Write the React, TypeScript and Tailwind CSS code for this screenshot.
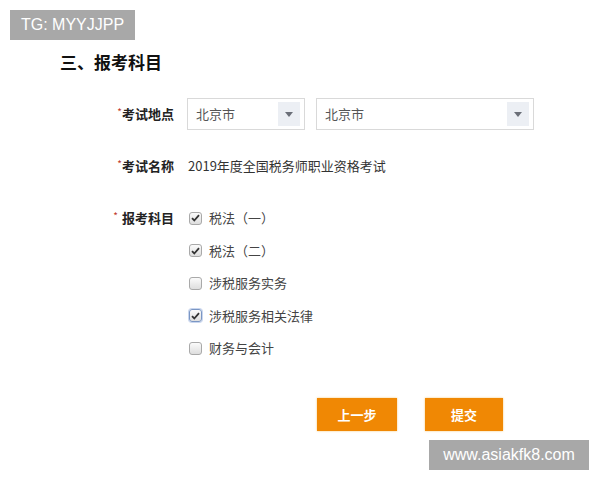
const subjects: [string, boolean, boolean][] = [
  ["税法（一）", true, false],
  ["税法（二）", true, false],
  ["涉税服务实务", false, false],
  ["涉税服务相关法律", true, true],
  ["财务与会计", false, false],
];

const cjk = { fontFamily: '"Noto Sans CJK SC", "Liberation Sans", sans-serif' };

function Arrow() {
  return (
    <span className="flex h-[24px] w-[22px] items-center justify-center bg-[#eceff4]">
      <svg width="8" height="5" viewBox="0 0 8 5">
        <path d="M0 0h8L4 5z" fill="#6b6f78" />
      </svg>
    </span>
  );
}

function Select({ width }: { width: string }) {
  return (
    <div className={`flex h-[32px] ${width} items-center justify-between border border-[#d9d9d9] bg-white pl-[8px] pr-[4px]`}>
      <span className="text-[13px] text-[#555]">北京市</span>
      <Arrow />
    </div>
  );
}

function Box({ checked, focus }: { checked: boolean; focus: boolean }) {
  return (
    <span
      className={`ml-px flex h-[13px] w-[13px] items-center justify-center rounded-[3px] border bg-gradient-to-b from-[#fbfbfb] to-[#dedede] ${
        focus ? "border-[#7a96c4] shadow-[0_0_0_1px_#c9d6ee]" : "border-[#a9a9a9]"
      }`}
    >
      {checked && (
        <svg width="9" height="8" viewBox="0 0 9 8">
          <path d="M1 4.2l2.3 2.3L8 1.2" stroke="#333" strokeWidth="1.8" fill="none" />
        </svg>
      )}
    </span>
  );
}

function Label({ text, gap }: { text: string; gap?: boolean }) {
  return (
    <div className="w-[174px] shrink-0 text-right text-[13px] font-bold text-[#222]">
      <span className="text-[10px] font-normal text-[#c0392b] align-top">*</span>
      {gap && <span className="inline-block w-[4px]" />}
      {text}
    </div>
  );
}

export default function App() {
  return (
    <div className="relative h-[480px] w-[600px] overflow-hidden bg-white text-[#333]" style={cjk}>
      <div
        className="absolute left-[10px] top-[10px] flex h-[30px] w-[125px] items-center justify-center bg-[#a8a8a8] text-[16px] text-white"
        style={{ fontFamily: '"Liberation Sans", Arial, sans-serif' }}
      >
        TG: MYYJJPP
      </div>

      <h2 className="ml-[60px] pt-[50px] text-[17px] font-bold leading-[24px] text-[#111]">三、报考科目</h2>

      <div className="mt-[24px] flex items-center gap-[13px]">
        <Label text="考试地点" />
        <div className="flex gap-[11px]">
          <Select width="w-[118px]" />
          <Select width="w-[218px]" />
        </div>
      </div>

      <div className="mt-[26px] flex h-[20px] items-center gap-[14px]">
        <Label text="考试名称" />
        <span className="text-[13px] text-[#333]">2019年度全国税务师职业资格考试</span>
      </div>

      <div className="mt-[32px] flex items-start gap-[14px]">
        <div className="flex h-[20px] items-center">
          <Label text="报考科目" gap />
        </div>
        <div className="flex flex-col gap-[12.5px]">
          {subjects.map(([name, checked, focus]) => (
            <div key={name} className="flex h-[20px] items-center gap-[7px]">
              <Box checked={checked} focus={focus} />
              <span className="text-[13px] text-[#444]">{name}</span>
            </div>
          ))}
        </div>
      </div>

      <div className="ml-[317px] mt-[40px] flex gap-[28px]">
        <button className="h-[33px] w-[80px] bg-[#f08804] text-[13px] font-bold text-white shadow-[0_0_2px_#f5c97a]">
          上一步
        </button>
        <button className="h-[33px] w-[78px] bg-[#f08804] text-[13px] font-bold text-white shadow-[0_0_2px_#f5c97a]">
          提交
        </button>
      </div>

      <div
        className="absolute left-[429px] top-[440px] flex h-[30px] w-[160px] items-center justify-center bg-[#a8a8a8] text-[16px] text-white"
        style={{ fontFamily: '"Liberation Sans", Arial, sans-serif' }}
      >
        www.asiakfk8.com
      </div>
    </div>
  );
}
